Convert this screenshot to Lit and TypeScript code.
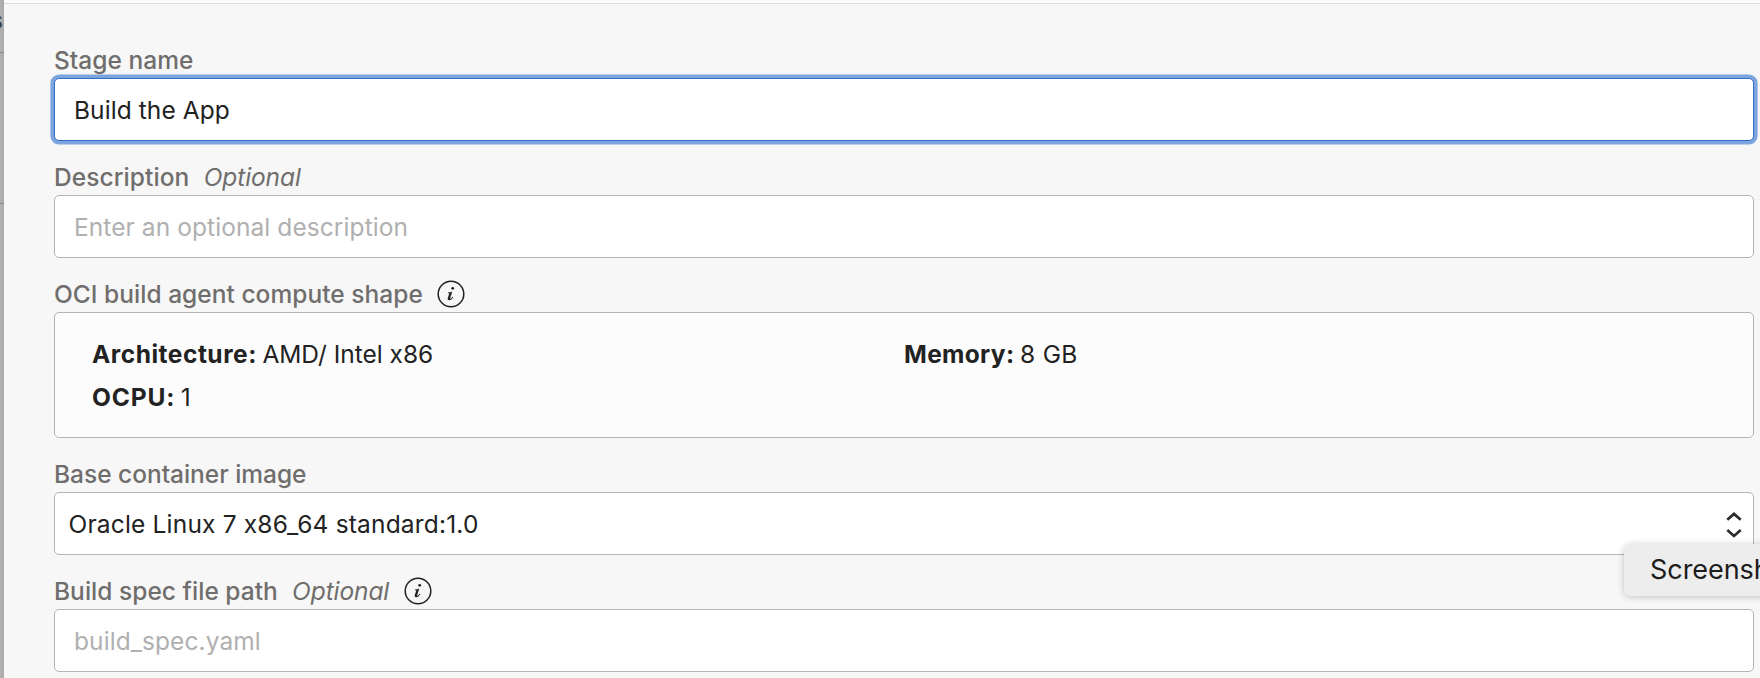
import { LitElement, html, css, svg, nothing } from "lit";

const infoIcon = html`<svg class="info" viewBox="0 0 28 28" aria-hidden="true">
  ${svg`<circle cx="14" cy="14" r="12.8" fill="none" stroke="#222" stroke-width="1.5"/>
  <circle cx="15.7" cy="8.3" r="1.4" fill="#222"/>
  <path d="M11 12.6C12.6 12.5 13.8 12.1 15.3 11.5L13.2 18.3C13 19 13.4 19.1 14 18.6C14.6 18.1 15.2 17.5 15.7 16.8L16.3 17.2C15.2 18.9 13.8 20.2 12.2 20.2C10.8 20.2 10.4 19.3 10.8 18L12.3 13.4L10.9 13.2Z" fill="#222"/>`}
</svg>`;

class AppRoot extends LitElement {
  static styles = css`
    :host {
      display: block;
      font-family: Inter, "Liberation Sans", sans-serif;
      font-size: 24.5px;
      color: #222;
    }
    * { box-sizing: border-box; }
    .page {
      position: relative;
      display: flex;
      width: 1760px;
      height: 678px;
      overflow: hidden;
      background: #f7f7f7;
    }
    .backdrop {
      flex: none;
      width: 4px;
      background: linear-gradient(90deg, #b4b2b1, #aaa9a8);
      display: flex;
      flex-direction: column;
    }
    .backdrop div { border-bottom: 1px solid #858483; flex: none; overflow: hidden; }
    .b1 {
      height: 53px;
      padding: 5px 1px 0 0;
      display: flex;
      justify-content: flex-end;
      line-height: 30px;
      font-weight: 600;
      color: #444;
    }
    .b2 { height: 151px; }
    .drawer { flex: 1; min-width: 0; }
    .top { height: 4px; background: #fcfcfc; border-bottom: 1px solid #dedede; }
    form { padding: 20px 6px 0 50px; }
    .label {
      height: 54px;
      padding: 21px 0 3px;
      display: flex;
      align-items: center;
      line-height: 30px;
      font-weight: 500;
      color: #6f6e6d;
      white-space: pre;
    }
    .opt { font-weight: 400; font-style: italic; margin-left: 14.2px; letter-spacing: -0.1px; }
    .info { width: 28px; height: 28px; flex: none; margin-left: 14.4px; }
    .box {
      height: 63px;
      border: 1px solid #b1b5ba;
      border-radius: 5px;
      background: #fff;
      padding: 1px 11px 0 19px;
      display: flex;
      align-items: center;
      justify-content: space-between;
      white-space: pre;
    }
    .focus { border-color: #2d70c9; box-shadow: 0 0 0 3.6px #7da4dc; }
    .ph { color: #b0b0b0; }
    .select { padding: 1px 11px 0 13.5px; }
    .chev { width: 16px; height: 28px; margin-top: 1px; }
    .compute {
      height: 126px;
      border: 1px solid #b1b5ba;
      border-radius: 5px;
      background: #fcfcfc;
      padding: 20px 0 0 37px;
      display: grid;
      grid-template-columns: 812px 1fr;
      grid-auto-rows: 43px;
      line-height: 43px;
      white-space: pre;
    }
    b { font-weight: 700; }
    .gap { margin-left: 5.5px; }
    .flat { letter-spacing: -0.02px; }
    .snug { letter-spacing: 0.03px; }
    .even { letter-spacing: 0.08px; }
    .open { letter-spacing: 0.18px; }
    .memory { letter-spacing: 0.33px; }
    .arch { letter-spacing: 0.52px; }
    .ocpu { letter-spacing: 0.85px; }
    .tip {
      position: absolute;
      left: 1624px;
      top: 544px;
      width: 160px;
      height: 52px;
      padding-left: 26px;
      border-radius: 7px;
      background: #ededed;
      box-shadow: 0 1px 7px rgba(0, 0, 0, 0.22);
      font-size: 27px;
      line-height: 51px;
      letter-spacing: -0.05px;
      color: #1c1c1c;
      white-space: pre;
    }
  `;

  label(text: string, track: string, optional = false, info = false) {
    return html`<div class="label"><span class=${track}>${text}</span>${optional ? html`<span class="opt">Optional</span>` : nothing}${info ? infoIcon : nothing}</div>`;
  }

  render() {
    return html`<div class="page">
      <div class="backdrop"><div class="b1">s</div><div class="b2"></div></div>
      <div class="drawer">
        <div class="top"></div>
        <form>
          ${this.label("Stage name", "snug")}
          <div class="box focus"><span class="even">Build the App</span></div>
          ${this.label("Description", "even", true)}
          <div class="box ph"><span class="even">Enter an optional description</span></div>
          ${this.label("OCI build agent compute shape", "snug", false, true)}
          <div class="compute">
            <div><b class="arch">Architecture:</b><span class="gap flat">AMD/ Intel x86</span></div>
            <div><b class="memory">Memory:</b><span class="gap memory">8 GB</span></div>
            <div><b class="ocpu">OCPU:</b><span class="gap">1</span></div>
          </div>
          ${this.label("Base container image", "flat")}
          <div class="box select">
            <span class="open">Oracle Linux 7 x86_64 standard:1.0</span>
            <svg class="chev" viewBox="0 0 16 28">${svg`<path d="M1.3 8.8L8 2.9L14.7 8.8M1.3 19.1L8 25L14.7 19.1" fill="none" stroke="#2b2b2b" stroke-width="2.7"/>`}</svg>
          </div>
          ${this.label("Build spec file path", "snug", true, true)}
          <div class="box ph"><span class="even">build_spec.yaml</span></div>
        </form>
      </div>
      <div class="tip">Screenshot</div>
    </div>`;
  }
}
customElements.define("app-root", AppRoot);
